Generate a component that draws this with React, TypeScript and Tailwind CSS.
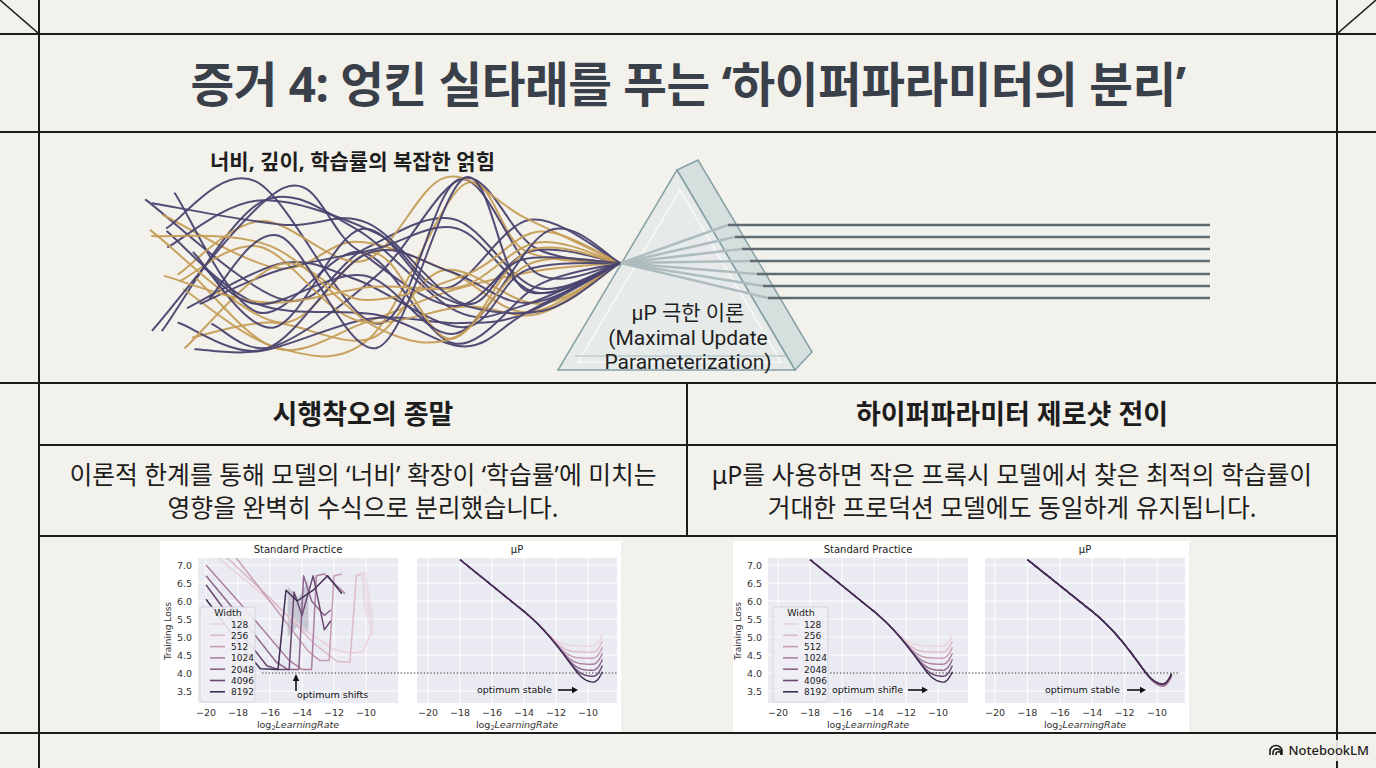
import React from 'react';

const INK = 'border-[#1c1c1c]';
const PAL = ['#ead3d9', '#dcbac7', '#c79db3', '#ab80a0', '#8b638b', '#684871', '#3f2c52'];
const WIDTHS = ['128', '256', '512', '1024', '2048', '4096', '8192'];

// deterministic random so the tangle is the same every run
function makeRng(seed: number) {
  return () => {
    seed = (seed + 0x6d2b79f5) | 0;
    let t = Math.imul(seed ^ (seed >>> 15), 1 | seed);
    t = (t + Math.imul(t ^ (t >>> 7), 61 | t)) ^ t;
    return ((t ^ (t >>> 14)) >>> 0) / 4294967296;
  };
}

function smoothPath(pts: [number, number][]) {
  let d = `M${pts[0][0].toFixed(1)} ${pts[0][1].toFixed(1)}`;
  for (let i = 0; i < pts.length - 1; i++) {
    const p0 = pts[i - 1] || pts[i];
    const p1 = pts[i];
    const p2 = pts[i + 1];
    const p3 = pts[i + 2] || p2;
    const c1x = p1[0] + (p2[0] - p0[0]) / 6;
    const c1y = p1[1] + (p2[1] - p0[1]) / 6;
    const c2x = p2[0] - (p3[0] - p1[0]) / 6;
    const c2y = p2[1] - (p3[1] - p1[1]) / 6;
    d += ` C${c1x.toFixed(1)} ${c1y.toFixed(1)} ${c2x.toFixed(1)} ${c2y.toFixed(1)} ${p2[0].toFixed(1)} ${p2[1].toFixed(1)}`;
  }
  return d;
}

const tangle = (() => {
  const r = makeRng(7);
  const out: { d: string; c: string }[] = [];
  for (let k = 0; k < 26; k++) {
    const x0 = 145 + r() * 70;
    const pts: [number, number][] = [[x0, 190 + r() * 160]];
    [270, 365, 455, 535].forEach(x => {
      const e = 88 * Math.min(1, Math.max(0, (625 - x) / 160));
      pts.push([x + (r() - 0.5) * 30, 265 + e * (2 * r() - 1)]);
    });
    pts.push([620, 263]);
    out.push({ d: smoothPath(pts), c: k % 5 === 1 || k % 5 === 3 ? '#c59d57' : '#4a4370' });
  }
  return out;
})();

const RAYS: [number, number][] = [
  [728, 225], [735, 237], [742, 249], [750, 261], [757, 274], [763, 286], [768, 298],
];

function Illustration() {
  return (
    <svg width="1296" height="249" viewBox="40 133 1296 249" className="block">
      {tangle.map((t, i) => (
        <path key={i} d={t.d} fill="none" stroke={t.c} strokeWidth="2" strokeLinecap="round" opacity="0.95" />
      ))}
      {/* prism */}
      <polygon points="677,170 698,160 812,352 795,370" fill="#bccfd3" fillOpacity="0.55" stroke="#86a0a5" strokeWidth="1.5" />
      <polygon points="677,170 558,370 795,370" fill="#dde8ea" fillOpacity="0.6" stroke="#86a0a5" strokeWidth="1.5" />
      <polygon points="680,190 578,362 781,362" fill="none" stroke="#ffffff" strokeOpacity="0.7" strokeWidth="1.5" />
      <line x1="575" y1="356" x2="788" y2="356" stroke="#a6babf" strokeWidth="1" />
      {RAYS.map(([x, y], i) => (
        <line key={'f' + i} x1="621" y1="263" x2={x} y2={y} stroke="#aebcbf" strokeWidth="2.5" />
      ))}
      {RAYS.map(([x, y], i) => (
        <line key={'h' + i} x1={x} y1={y} x2="1210" y2={y} stroke="#5e6c71" strokeWidth="2.5" />
      ))}
    </svg>
  );
}

/* ---------- charts ---------- */

const yv = (v: number) => 24 + (7 - v) * 36;
const XT = [-20, -18, -16, -14, -12, -10];
const YT = [7.0, 6.5, 6.0, 5.5, 5.0, 4.5, 4.0, 3.5];
const CHART_FONT = 'DejaVu Sans, Liberation Sans, sans-serif';

function convCurve(i: number, spread: boolean, xm: (v: number) => number) {
  const pts: string[] = [];
  for (let v = -18; v <= -9.0001; v += 0.1) {
    const m = spread ? 4.75 - i * 0.17 : 3.64 + (i - 3) * 0.012;
    const C = 7.15 - 0.36 * (v + 18) - 0.05 * Math.max(0, v + 14) ** 2;
    let L = m + Math.log(1 + Math.exp(5 * (C - m))) / 5;
    if (v > -9.7) L += 0.85 * (v + 9.7) ** 2;
    pts.push(`${xm(v).toFixed(1)},${yv(L).toFixed(1)}`);
  }
  return pts.join(' ');
}

const SP: [number, number][][] = [
  [[-19.4, 7.25], [-16.5, 6.2], [-13.5, 5.1], [-12.0, 4.65], [-10.9, 4.55], [-10.2, 4.6], [-9.6, 5.2]],
  [[-18.8, 7.25], [-15.8, 6.0], [-13.2, 4.8], [-11.8, 4.32], [-11.0, 4.3], [-10.6, 6.7], [-10.3, 6.75]],
  [[-18.2, 7.25], [-15.5, 5.7], [-13.6, 4.6], [-12.9, 4.35], [-12.3, 4.35], [-12.0, 6.7], [-11.5, 6.75]],
  [[-20, 7.0], [-17, 5.5], [-14.8, 4.35], [-14.0, 4.1], [-13.4, 4.1], [-13.1, 6.7], [-12.6, 6.75], [-11.3, 6.2]],
  [[-20, 6.7], [-17.2, 5.2], [-15.6, 4.3], [-14.9, 4.1], [-14.2, 4.1], [-13.9, 6.7], [-13.4, 6.0], [-12.6, 5.6], [-12.2, 5.75]],
  [[-20, 6.45], [-17.6, 5.0], [-16.2, 4.2], [-15.5, 4.1], [-14.8, 4.1], [-14.5, 6.25], [-14.0, 5.6], [-13.3, 6.7], [-12.6, 5.2], [-12.2, 5.45]],
  [[-20, 6.05], [-17.8, 4.75], [-16.6, 4.12], [-15.5, 4.1], [-15.0, 6.3], [-14.3, 6.0], [-13.3, 6.3], [-12.4, 6.7], [-11.5, 6.2]],
];

type Ax = { x0: number; x1: number; xm: (v: number) => number; title: string; id: string; yTicks?: boolean };

function Axes({ ax, children }: { ax: Ax; children?: React.ReactNode }) {
  const cx = (ax.x0 + ax.x1) / 2;
  return (
    <g fontFamily={CHART_FONT} fill="#333">
      <defs>
        <clipPath id={ax.id}>
          <rect x={ax.x0} y={17} width={ax.x1 - ax.x0} height={145} />
        </clipPath>
      </defs>
      <rect x={ax.x0} y={17} width={ax.x1 - ax.x0} height={145} fill="#eaeaf2" />
      {XT.map(t => (
        <line key={t} x1={ax.xm(t)} x2={ax.xm(t)} y1={17} y2={162} stroke="#fff" strokeWidth="1" />
      ))}
      {YT.map(t => (
        <line key={t} x1={ax.x0} x2={ax.x1} y1={yv(t)} y2={yv(t)} stroke="#fff" strokeWidth="1" />
      ))}
      <text x={cx} y={12} fontSize="10" textAnchor="middle" fill="#222">{ax.title}</text>
      {XT.map(t => (
        <text key={t} x={ax.xm(t)} y={175} fontSize="9.5" textAnchor="middle">{'\u2212' + Math.abs(t)}</text>
      ))}
      <text x={cx} y={187} fontSize="9.5" textAnchor="middle">
        log<tspan fontSize="6.5" dy="2">2</tspan>
        <tspan dy="-2" fontStyle="italic">LearningRate</tspan>
      </text>
      {ax.yTicks && (
        <>
          {YT.map(t => (
            <text key={t} x={ax.x0 - 6} y={yv(t) + 3.5} fontSize="9.5" textAnchor="end">{t.toFixed(1)}</text>
          ))}
          <text transform={`translate(${ax.x0 - 27} 90) rotate(-90)`} fontSize="9" textAnchor="middle">Training Loss</text>
        </>
      )}
      <g clipPath={`url(#${ax.id})`}>{children}</g>
    </g>
  );
}

function Legend({ x }: { x: number }) {
  return (
    <g fontFamily={CHART_FONT}>
      <rect x={x} y={66} width={55} height={95} rx="3" fill="#eeeef4" fillOpacity="0.9" stroke="#cfcfd8" strokeWidth="0.8" />
      <text x={x + 28} y={75} fontSize="9.5" textAnchor="middle" fill="#222">Width</text>
      {WIDTHS.map((w, i) => (
        <g key={w}>
          <line x1={x + 10} x2={x + 25} y1={83 + i * 11.3} y2={83 + i * 11.3} stroke={PAL[i]} strokeWidth="1.6" />
          <text x={x + 31} y={86.5 + i * 11.3} fontSize="9" fill="#222">{w}</text>
        </g>
      ))}
    </g>
  );
}

function Arrow({ x1, x2, y }: { x1: number; x2: number; y: number }) {
  return (
    <g>
      <line x1={x1} x2={x2 - 5} y1={y} y2={y} stroke="#111" strokeWidth="1.6" />
      <polygon points={`${x2},${y} ${x2 - 6},${y - 3.2} ${x2 - 6},${y + 3.2}`} fill="#111" />
    </g>
  );
}

function LeftChart() {
  const axA: Ax = { x0: 38, x1: 238, xm: v => 46 + (v + 20) * 16, title: 'Standard Practice', id: 'la', yTicks: true };
  const axB: Ax = { x0: 257, x1: 457, xm: v => 268 + (v + 20) * 16, title: '\u03bcP', id: 'lb' };
  return (
    <svg width="461" height="191" viewBox="0 0 461 191" className="block bg-white">
      <Axes ax={axA}>
        <polygon
          points={[[-14.9, 6.4], [-14.2, 6.1], [-13.6, 6.6], [-13.6, 5.1], [-14.3, 5.3], [-14.9, 5.0]].map(([v, l]) => `${axA.xm(v)},${yv(l)}`).join(' ')}
          fill="#6b6b8a" fillOpacity="0.28"
        />
        <polygon
          points={[[-10.3, 6.8], [-10.0, 6.8], [-9.5, 5.5], [-9.6, 5.0], [-10.2, 5.9]].map(([v, l]) => `${axA.xm(v)},${yv(l)}`).join(' ')}
          fill="#e2bcc6" fillOpacity="0.3"
        />
        {SP.map((line, i) => (
          <polyline key={i} points={line.map(([v, l]) => `${axA.xm(v)},${yv(l)}`).join(' ')} fill="none" stroke={PAL[i]} strokeWidth="1.5" strokeLinejoin="round" />
        ))}
      </Axes>
      <Axes ax={axB}>
        {[0, 1, 2, 3, 4, 5, 6].map(i => (
          <polyline key={i} points={convCurve(i, true, axB.xm)} fill="none" stroke={PAL[i]} strokeWidth="1.4" />
        ))}
      </Axes>
      <Legend x={40} />
      <line x1={102} x2={457} y1={yv(4)} y2={yv(4)} stroke="#222" strokeWidth="0.9" strokeDasharray="1.5 1.8" />
      <line x1={136} x2={136} y1={150} y2={139} stroke="#111" strokeWidth="1.6" />
      <polygon points="136,133 132.8,140 139.2,140" fill="#111" />
      <text x={137} y={157} fontSize="9.5" fontFamily={CHART_FONT} fill="#111">optimum shifts</text>
      <text x={317} y={152} fontSize="9.5" fontFamily={CHART_FONT} fill="#111">optimum stable</text>
      <Arrow x1={398} x2={418} y={149} />
    </svg>
  );
}

function RightChart() {
  const axA: Ax = { x0: 35, x1: 235, xm: v => 45 + (v + 20) * 16, title: 'Standard Practice', id: 'ra', yTicks: true };
  const axB: Ax = { x0: 252, x1: 452, xm: v => 262 + (v + 20) * 16.2, title: '\u03bcP', id: 'rb' };
  return (
    <svg width="456" height="191" viewBox="0 0 456 191" className="block bg-white">
      <Axes ax={axA}>
        {[0, 1, 2, 3, 4, 5, 6].map(i => (
          <polyline key={i} points={convCurve(i, true, axA.xm)} fill="none" stroke={PAL[i]} strokeWidth="1.4" />
        ))}
      </Axes>
      <Axes ax={axB}>
        {[0, 1, 2, 3, 4, 5, 6].map(i => (
          <polyline key={i} points={convCurve(i, false, axB.xm)} fill="none" stroke={PAL[Math.max(i, 3)]} strokeWidth="1.5" />
        ))}
      </Axes>
      <Legend x={40} />
      <line x1={97} x2={447} y1={yv(4)} y2={yv(4)} stroke="#222" strokeWidth="0.9" strokeDasharray="1.5 1.8" />
      <text x={99} y={152} fontSize="9.5" fontFamily={CHART_FONT} fill="#111">optimum shifle</text>
      <Arrow x1={175} x2={195} y={149} />
      <text x={312} y={152} fontSize="9.5" fontFamily={CHART_FONT} fill="#111">optimum stable</text>
      <Arrow x1={394} x2={413} y={149} />
    </svg>
  );
}

/* ---------- page ---------- */

function Gutter({ side, children }: { side: 'l' | 'r'; children?: React.ReactNode }) {
  return (
    <div className={`relative w-[40px] shrink-0 ${side === 'l' ? 'border-r-2' : 'border-l-2'} ${INK}`}>
      {children}
    </div>
  );
}

function NotebookLogo() {
  return (
    <svg width="14" height="12" viewBox="0 0 14 12" fill="none" stroke="#1c1c1c" strokeWidth="1.6">
      <path d="M1 11 V7 A6 5.5 0 0 1 13 7 V11" />
      <path d="M4 11 V8.5 A4 3.6 0 0 1 12 8.5 V11" />
      <path d="M7 11 V10 A2.5 2.2 0 0 1 12 10" />
    </svg>
  );
}

export default function App() {
  return (
    <div className="relative flex h-[768px] w-[1376px] flex-col overflow-hidden bg-[#f3f1eb] font-['Noto_Sans','Noto_Sans_CJK_KR',sans-serif] text-[#1d1d1d]">
      {/* top band */}
      <div className={`flex h-[35px] shrink-0 border-b-2 ${INK}`}>
        <Gutter side="l">
          <svg className="absolute inset-0" width="38" height="33" viewBox="0 0 38 33">
            <line x1="0" y1="0" x2="38" y2="33" stroke="#1c1c1c" strokeWidth="1.5" />
          </svg>
        </Gutter>
        <div className="flex-1" />
        <Gutter side="r">
          <svg className="absolute inset-0" width="38" height="33" viewBox="0 0 38 33">
            <line x1="0" y1="33" x2="38" y2="0" stroke="#1c1c1c" strokeWidth="1.5" />
          </svg>
        </Gutter>
      </div>

      {/* title */}
      <div className={`flex h-[98px] shrink-0 border-b-2 ${INK}`}>
        <Gutter side="l" />
        <div className="flex flex-1 items-center justify-center pt-[2px]">
          <h1 className="text-[47.5px] font-bold leading-none tracking-[-0.01em] text-[#3a4049]">
            증거 4: 엉킨 실타래를 푸는 ‘하이퍼파라미터의 분리’
          </h1>
        </div>
        <Gutter side="r" />
      </div>

      {/* illustration */}
      <div className={`flex h-[251px] shrink-0 border-b-2 ${INK}`}>
        <Gutter side="l" />
        <div className="relative flex-1">
          <Illustration />
          <p className="absolute left-[170px] top-[14px] text-[21px] font-bold leading-[28px] text-[#1f1f1f]">
            너비, 깊이, 학습률의 복잡한 얽힘
          </p>
          <p className="absolute left-1/2 top-[168px] -translate-x-1/2 whitespace-nowrap text-center font-['Roboto','Noto_Sans_CJK_KR',sans-serif] text-[21px] leading-[24.5px] text-[#1f1f1f]">
            μP 극한 이론
            <br />
            (Maximal Update
            <br />
            Parameterization)
          </p>
        </div>
        <Gutter side="r" />
      </div>

      {/* comparison */}
      <div className={`flex shrink-0 border-b-2 ${INK}`}>
        <Gutter side="l" />
        <div className="flex flex-1 flex-col">
          <div className={`grid h-[62px] grid-cols-2 border-b-2 ${INK}`}>
            <div className={`flex items-center justify-center border-r-2 ${INK} text-[27px] font-bold`}>
              시행착오의 종말
            </div>
            <div className="flex items-center justify-center text-[27px] font-bold">하이퍼파라미터 제로샷 전이</div>
          </div>
          <div className={`grid h-[91px] grid-cols-2 border-b-2 ${INK}`}>
            <div className={`flex flex-col items-center justify-center border-r-2 ${INK} text-[24.8px] leading-[33px]`}>
              <p>이론적 한계를 통해 모델의 ‘너비’ 확장이 ‘학습률’에 미치는</p>
              <p>영향을 완벽히 수식으로 분리했습니다.</p>
            </div>
            <div className="flex flex-col items-center justify-center text-[24.8px] leading-[33px]">
              <p>μP를 사용하면 작은 프록시 모델에서 찾은 최적의 학습률이</p>
              <p>거대한 프로덕션 모델에도 동일하게 유지됩니다.</p>
            </div>
          </div>
          <div className="flex h-[195px] items-end gap-[112px] pl-[120px]">
            <LeftChart />
            <RightChart />
          </div>
        </div>
        <Gutter side="r" />
      </div>

      {/* bottom band */}
      <div className="flex flex-1">
        <Gutter side="l" />
        <div className="flex-1" />
        <Gutter side="r" />
      </div>

      <div className="absolute bottom-[7px] right-[4px] flex items-center gap-[5px] bg-[#f3f1eb]/90 px-[3px] py-[1px] text-[13px] font-medium text-[#1c1c1c]">
        <NotebookLogo />
        <span>NotebookLM</span>
      </div>
    </div>
  );
}
